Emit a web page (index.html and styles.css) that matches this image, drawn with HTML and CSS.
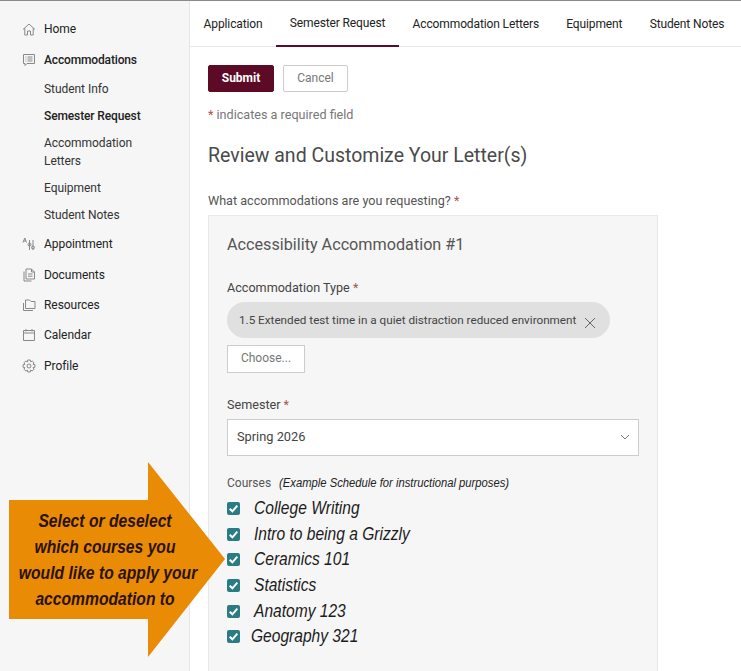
FILE: index.html
```html
<!DOCTYPE html>
<html lang="en">
<head>
    <meta charset="UTF-8">
    <meta name="viewport" content="width=device-width, initial-scale=1.0">
    <title>Semester Request</title>
    <link rel="stylesheet" href="styles.css">
</head>
<body>
    <div class="page">
        <nav class="sidebar">
            <a class="nav-item nav-home">
                <svg class="nav-icon" viewBox="0 0 14 14"><path d="M1 7.5 7 2 13 7.5M2.8 6.2V13H5.5V9H8.5V13H11.2V6.2"/></svg>
                Home
            </a>
            <a class="nav-item nav-open">
                <svg class="nav-icon" viewBox="0 0 14 14"><path d="M1.5 1.5H12.5V10.5H5L3 12.5V10.5H1.5ZM3.5 4H4.3M5.5 4H10.5M3.5 6H4.3M5.5 6H10.5M3.5 8H4.3M5.5 8H10.5"/></svg>
                Accommodations
            </a>
            <div class="subnav">
                <a class="sub-item">Student Info</a>
                <a class="sub-item sub-current">Semester Request</a>
                <a class="sub-item">Accommodation Letters</a>
                <a class="sub-item">Equipment</a>
                <a class="sub-item">Student Notes</a>
            </div>
            <a class="nav-item">
                <svg class="nav-icon" viewBox="0 0 14 14"><path d="M1 5.5 2.8 1 4.5 5.5M1.6 4H4M7.5 3V13M11 3V13M6 7.5A1.5 1.5 0 0 0 9 7.5A1.5 1.5 0 0 0 6 7.5ZM9.5 10.5A1.5 1.5 0 0 0 12.5 10.5A1.5 1.5 0 0 0 9.5 10.5Z"/></svg>
                Appointment
            </a>
            <a class="nav-item">
                <svg class="nav-icon" viewBox="0 0 14 14"><path d="M4 1H9.5L12.5 4V11H4ZM9.5 1V4H12.5M6 6H10.5M6 8.2H10.5M2 3.5V13H9.5"/></svg>
                Documents
            </a>
            <a class="nav-item">
                <svg class="nav-icon" viewBox="0 0 14 14"><path d="M3.5 3V2H7.5L9 3.5H13V10.5H3.5ZM1.5 5V12.5H11"/></svg>
                Resources
            </a>
            <a class="nav-item">
                <svg class="nav-icon" viewBox="0 0 14 14"><path d="M1.5 2.5H12.5V12.5H1.5ZM1.5 5H12.5M4 1V3.5M10 1V3.5"/></svg>
                Calendar
            </a>
            <a class="nav-item">
                <svg class="nav-icon" viewBox="0 0 14 14"><path d="M5.8 1H8.2L8.6 2.8 10.2 2 12 3.8 11.1 5.4 13 5.8V8.2L11.1 8.6 12 10.2 10.2 12 8.6 11.1 8.2 13H5.8L5.4 11.1 3.8 12 2 10.2 2.9 8.6 1 8.2V5.8L2.9 5.4 2 3.8 3.8 2 5.4 2.9ZM5 7A2 2 0 0 0 9 7A2 2 0 0 0 5 7Z"/></svg>
                Profile
            </a>
        </nav>

        <main class="content">
            <div class="tabs">
                <a class="tab">Application</a>
                <a class="tab tab-active">Semester Request</a>
                <a class="tab">Accommodation Letters</a>
                <a class="tab">Equipment</a>
                <a class="tab">Student Notes</a>
            </div>

            <div class="form-area">
                <div class="actions">
                    <button class="btn btn-primary">Submit</button>
                    <button class="btn btn-plain">Cancel</button>
                </div>
                <p class="required-note"><span class="star">*</span> indicates a required field</p>
                <h1 class="form-title">Review and Customize Your Letter(s)</h1>
                <p class="question">What accommodations are you requesting? <span class="star">*</span></p>

                <section class="card">
                    <h2 class="card-title">Accessibility Accommodation #1</h2>

                    <p class="field-label">Accommodation Type <span class="star">*</span></p>
                    <div class="chip">
                        <span class="chip-text">1.5 Extended test time in a quiet distraction reduced environment</span>
                        <svg class="chip-close" viewBox="0 0 12 12"><path d="M1 1 11 11M11 1 1 11"/></svg>
                    </div>
                    <button class="btn btn-choose">Choose...</button>

                    <p class="field-label semester-label">Semester <span class="star">*</span></p>
                    <div class="select-box">
                        <span>Spring 2026</span>
                        <svg class="select-caret" viewBox="0 0 10 6"><path d="M1 1 5 5 9 1"/></svg>
                    </div>

                    <p class="courses-label">Courses <em class="courses-hint">(Example Schedule for instructional purposes)</em></p>
                    <ul class="course-list">
                        <li class="course"><span class="check"><svg viewBox="0 0 12 12"><path d="M2.5 6.2 5 8.6 9.5 3.4"/></svg></span><span class="course-name">College Writing</span></li>
                        <li class="course"><span class="check"><svg viewBox="0 0 12 12"><path d="M2.5 6.2 5 8.6 9.5 3.4"/></svg></span><span class="course-name">Intro to being a Grizzly</span></li>
                        <li class="course"><span class="check"><svg viewBox="0 0 12 12"><path d="M2.5 6.2 5 8.6 9.5 3.4"/></svg></span><span class="course-name">Ceramics 101</span></li>
                        <li class="course"><span class="check"><svg viewBox="0 0 12 12"><path d="M2.5 6.2 5 8.6 9.5 3.4"/></svg></span><span class="course-name">Statistics</span></li>
                        <li class="course"><span class="check"><svg viewBox="0 0 12 12"><path d="M2.5 6.2 5 8.6 9.5 3.4"/></svg></span><span class="course-name">Anatomy 123</span></li>
                        <li class="course"><span class="check"><svg viewBox="0 0 12 12"><path d="M2.5 6.2 5 8.6 9.5 3.4"/></svg></span><span class="course-name course-name-left">Geography 321</span></li>
                    </ul>
                </section>
            </div>
        </main>

        <div class="callout">
            <svg class="callout-shape" viewBox="0 0 217 196"><polygon points="0,38 139,38 139,0 216,97 139,195 139,157 0,157"/></svg>
            <p class="callout-text">Select or deselect<br>which courses you<br>would like to apply your<br>accommodation to</p>
        </div>
    </div>
</body>
</html>
```

FILE: styles.css
```css
* {
    box-sizing: border-box;
}

html, body {
    margin: 0;
    height: 671px;
    overflow: hidden;
}

body {
    font-family: 'Roboto', sans-serif;
    background-color: #fff;
    color: #222;
}

.page {
    position: relative;
    display: flex;
    height: 671px;
    border-top: 1px solid #8a8a8a;
}

/* sidebar */
.sidebar {
    width: 190px;
    flex-shrink: 0;
    padding-top: 18px;
    background-color: #f6f6f6;
    border-right: 1px solid #e6e6e6;
}

.nav-item {
    display: flex;
    align-items: center;
    height: 30.4px;
    padding-left: 22px;
    font-size: 12px;
    letter-spacing: -0.05px;
    color: #222;
}

.nav-home {
    height: 20px;
    margin-bottom: 11px;
}

.nav-open {
    height: 20px;
    font-weight: 500;
    letter-spacing: -0.15px;
    margin-bottom: 5px;
}

.nav-icon {
    width: 14px;
    height: 14px;
    margin-right: 8px;
    fill: none;
    stroke: #888;
    stroke-width: 1;
}

.subnav {
    padding: 0 0 1px 44px;
}

.sub-item {
    display: block;
    width: 110px;
    padding: 4.5px 0;
    font-size: 12px;
    letter-spacing: -0.05px;
    line-height: 18px;
    color: #333;
}

.sub-current {
    font-weight: 500;
    letter-spacing: -0.12px;
    color: #222;
}

/* tabs */
.content {
    flex: 1;
    min-width: 0;
}

.tabs {
    display: flex;
    height: 46px;
    border-bottom: 1px solid #e8e8e8;
    white-space: nowrap;
}

.tab {
    display: flex;
    align-items: center;
    height: 46px;
    padding: 0 13.6px 1px;
    font-size: 12px;
    letter-spacing: -0.12px;
    color: #222;
}

.tab-active {
    border-bottom: 2px solid #5c0a25;
}

/* form */
.form-area {
    padding: 18px 0 0 18px;
}

.actions {
    display: flex;
    gap: 9px;
}

.btn {
    height: 27px;
    padding-bottom: 3px;
    font-family: 'Roboto', sans-serif;
    font-size: 12px;
    border-radius: 2px;
}

.btn-primary {
    width: 66px;
    font-weight: 700;
    color: #fff;
    background-color: #5c0a25;
    border: 1px solid #5c0a25;
}

.btn-plain {
    width: 65px;
    color: #777;
    background-color: #fff;
    border: 1px solid #ccc;
}

.star {
    color: #a5584f;
}

.required-note {
    margin: 14px 0 0;
    font-size: 12.6px;
    line-height: 18px;
    color: #777;
}

.form-title {
    margin: 19px 0 0;
    font-size: 19.5px;
    font-weight: 400;
    line-height: 26px;
    color: #4a4a4a;
}

.question {
    margin: 23px 0 0;
    font-size: 12.6px;
    line-height: 18px;
    color: #555;
}

.card {
    width: 450px;
    height: 480px;
    margin-top: 5px;
    padding: 18px 18px 0;
    background-color: #f6f6f6;
    border: 1px solid #e8e8e8;
}

.card-title {
    margin: 0;
    font-size: 16.2px;
    font-weight: 400;
    line-height: 22px;
    color: #555;
}

.field-label {
    margin: 23px 0 0;
    font-size: 12.6px;
    line-height: 18px;
    color: #444;
}

.chip {
    display: flex;
    align-items: center;
    width: 383px;
    height: 36px;
    margin-top: 5px;
    padding-left: 12px;
    background-color: #e0e0e0;
    border-radius: 18px;
}

.chip-text {
    font-size: 11.7px;
    color: #444;
    white-space: nowrap;
}

.chip-close {
    width: 12px;
    height: 12px;
    margin: 6px 0 0 8px;
    fill: none;
    stroke: #666;
    stroke-width: 1;
}

.btn-choose {
    display: block;
    width: 78px;
    height: 28px;
    margin-top: 7px;
    color: #777;
    background-color: #fff;
    border: 1px solid #ccc;
    border-radius: 0;
}

.semester-label {
    margin-top: 23px;
}

.select-box {
    display: flex;
    align-items: center;
    justify-content: space-between;
    width: 412px;
    height: 37px;
    margin-top: 5px;
    padding: 0 8px 2px 9px;
    font-size: 12.8px;
    color: #444;
    background-color: #fff;
    border: 1px solid #ccc;
}

.select-caret {
    width: 10px;
    height: 6px;
    fill: none;
    stroke: #777;
    stroke-width: 1;
}

.courses-label {
    margin: 18px 0 0;
    font-size: 12px;
    line-height: 18px;
    color: #555;
    white-space: nowrap;
}

/* the course text in the screenshot is a squeezed picture, so it is narrowed */
.courses-hint {
    display: inline-block;
    margin-left: 5px;
    font-family: 'Liberation Sans', sans-serif;
    font-size: 12.5px;
    color: #222;
    transform: scaleX(0.9);
    transform-origin: left center;
}

.course-list {
    margin: 4px 0 0;
    padding: 0;
    list-style: none;
}

.course {
    display: flex;
    align-items: center;
    height: 25.6px;
}

.check {
    display: flex;
    width: 13px;
    height: 13px;
    background-color: #2a7c82;
    border-radius: 2px;
}

.check svg {
    width: 13px;
    height: 13px;
    fill: none;
    stroke: #fff;
    stroke-width: 1.8;
}

.course-name {
    margin-left: 14px;
    font-family: 'Liberation Sans', sans-serif;
    font-size: 18px;
    font-style: italic;
    color: #1c1c1c;
    transform: scaleX(0.865);
    transform-origin: left center;
}

.course-name-left {
    margin-left: 11px;
}

/* orange arrow laid over the page */
.callout {
    position: absolute;
    left: 9px;
    top: 461px;
    width: 217px;
    height: 196px;
}

.callout-shape {
    display: block;
    width: 217px;
    height: 196px;
    fill: #e98b05;
}

.callout-text {
    position: absolute;
    left: -3px;
    top: 46px;
    width: 198px;
    margin: 0;
    font-family: 'Liberation Sans', sans-serif;
    font-size: 18px;
    font-style: italic;
    font-weight: 700;
    line-height: 26px;
    text-align: center;
    white-space: nowrap;
    color: #2a1205;
    transform: scaleX(0.87);
}
```
